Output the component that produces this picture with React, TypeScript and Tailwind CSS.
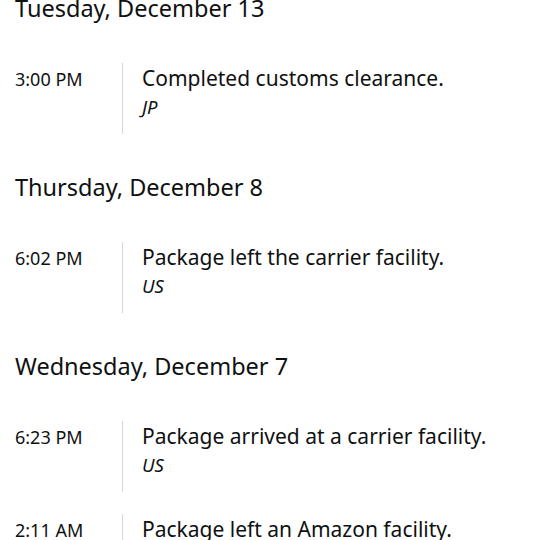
const sections = [
  {
    day: "Tuesday, December 13",
    events: [{ time: "3:00 PM", text: "Completed customs clearance.", place: "JP" }],
  },
  {
    day: "Thursday, December 8",
    events: [{ time: "6:02 PM", text: "Package left the carrier facility.", place: "US" }],
  },
  {
    day: "Wednesday, December 7",
    events: [
      { time: "6:23 PM", text: "Package arrived at a carrier facility.", place: "US" },
      { time: "2:11 AM", text: "Package left an Amazon facility.", place: "US" },
    ],
  },
];

export default function App() {
  return (
    <div
      className="w-[540px] h-[540px] overflow-hidden bg-white text-[#0f1111]"
      style={{ fontFamily: '"Noto Sans", "Open Sans", sans-serif' }}
    >
      <div className="-mt-[7px] pl-[15px]">
        {sections.map((s) => (
          <div key={s.day} className="pb-[38px]">
            <h2 className="text-[23.5px] leading-[30px] font-normal">{s.day}</h2>
            <div className="mt-10 flex flex-col gap-[22px]">
              {s.events.map((e) => (
                <div key={e.time} className="flex">
                  <div className="w-[107px] shrink-0 pt-[2px] text-[18px] leading-[28px]">
                    {e.time}
                  </div>
                  <div className="border-l border-[#d5d9d9] pl-[19px] pt-[1px] pb-[13px]">
                    <div className="text-[21px] leading-[28px]">{e.text}</div>
                    <div className="text-[18.5px] leading-[29px] italic">{e.place}</div>
                  </div>
                </div>
              ))}
            </div>
          </div>
        ))}
      </div>
    </div>
  );
}
